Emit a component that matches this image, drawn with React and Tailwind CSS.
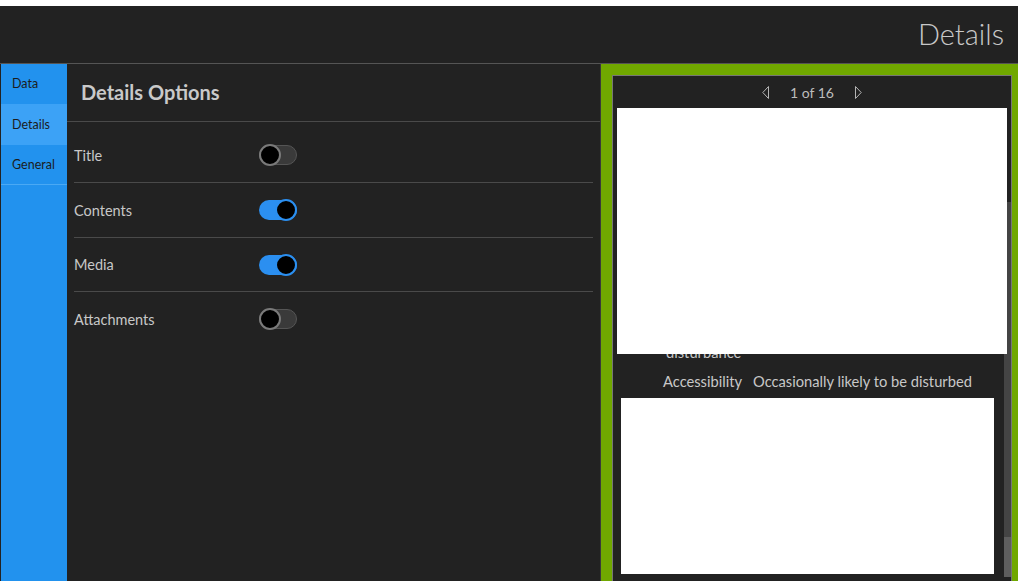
const options = [
  { label: "Title", on: false },
  { label: "Contents", on: true },
  { label: "Media", on: true },
  { label: "Attachments", on: false },
];

const tabs = ["Data", "Details", "General"];

const Toggle = ({ on }) => (
  <div className="relative h-[22px] w-[38px]">
    <div
      className={
        on
          ? "absolute left-0 top-[1px] h-[20px] w-[38px] rounded-full bg-[#2b8ff0]"
          : "absolute left-0 top-[1px] h-[20px] w-[38px] rounded-full border border-[#555] bg-[#3a3a3a]"
      }
    />
    <div
      className={
        on
          ? "absolute right-0 top-0 h-[22px] w-[22px] rounded-full border-2 border-[#2b8ff0] bg-black"
          : "absolute left-0 top-0 h-[22px] w-[22px] rounded-full border-2 border-[#7a7a7a] bg-black"
      }
    />
  </div>
);

const Arrow = ({ dir }) => (
  <svg width="8" height="13" viewBox="0 0 8 13" fill="none" stroke="#b5b5b5" strokeWidth="1">
    {dir === "left" ? (
      <polygon points="6.5,0.5 6.5,12.5 0.8,6.5" />
    ) : (
      <polygon points="1.5,0.5 1.5,12.5 7.2,6.5" />
    )}
  </svg>
);

export default function App() {
  return (
    <div className="h-[581px] w-[1018px] overflow-hidden bg-white pt-[6px] font-['Lato','Open_Sans',sans-serif]">
      <header className="flex h-[58px] items-center justify-end border-b border-[#555] bg-[#222] pr-[14px]">
        <span className="pb-[2px] text-[29px] font-light text-[#c8c8c8]">Details</span>
      </header>

      <div className="flex h-[517px]">
        {/* settings tabs */}
        <nav className="w-[67px] border-l border-[#222] bg-[#2292ee]">
          {tabs.map((t, i) => (
            <div
              key={t}
              className={
                "flex items-center pl-[11px] pt-[1px] text-[12.5px] text-[#1c1c1c] " +
                (i === 1 ? "h-[41px] bg-[#3ca2f6] " : "h-[40px] ") +
                (i === 2 ? "border-b border-[#4aa9f4]" : "")
              }
            >
              {t}
            </div>
          ))}
        </nav>

        {/* options list */}
        <main className="w-[533px] bg-[#222]">
          <div className="flex h-[58px] items-center border-b border-[#4a4a4a] pb-[1px] pl-[14px]">
            <h2 className="text-[20px] font-bold text-[#c9c9c9]">Details Options</h2>
          </div>
          <div className="px-[7px] pt-[6px]">
            {options.map((o, i) => (
              <div
                key={o.label}
                className={
                  "flex items-center " +
                  (i < 2 ? "h-[55px] " : "h-[54px] ") +
                  (i < options.length - 1 ? "border-b border-[#4a4a4a]" : "")
                }
              >
                <span className="w-[185px] pt-[1px] text-[14.5px] text-[#c8c8c8]">{o.label}</span>
                <Toggle on={o.on} />
              </div>
            ))}
          </div>
        </main>

        {/* preview */}
        <section className="flex-1 overflow-hidden border-l border-[#3a3a3a] bg-[#70a800] pl-[11px] pr-[6px] pt-[11px]">
          <div className="h-[540px] border border-[#777] bg-[#222]">
            <div className="flex h-[32px] items-center justify-center gap-[20px] text-[14px] text-[#bdbdbd]">
              <Arrow dir="left" />
              <span>1 of 16</span>
              <Arrow dir="right" />
            </div>
            <div className="relative flex h-[480px]">
              <div className="flex-1 pt-[214px]">
                <div className="flex pl-[50px] text-[14.7px] leading-[20px] text-[#c8c8c8]">
                  <span className="w-[90px] pl-[3px]">
                    Sensitivity to
                    <br />
                    disturbance
                  </span>
                  <span>Low</span>
                </div>
                <div className="mt-[9px] flex pl-[50px] text-[14.7px] leading-[20px] text-[#c8c8c8]">
                  <span className="w-[90px]">Accessibility</span>
                  <span>Occasionally likely to be disturbed</span>
                </div>
                <div className="ml-[8px] mt-[7px] h-[176px] w-[373px] bg-white" />
              </div>
              <div className="flex w-[7px] flex-col">
                <div className="h-[94px] bg-[#222]" />
                <div className="h-[335px] bg-[#444]" />
                <div className="h-[40px] bg-[#5e5e5e]" />
              </div>
              <div className="absolute left-[4px] top-0 h-[246px] w-[390px] bg-white" />
            </div>
          </div>
        </section>
      </div>
    </div>
  );
}
